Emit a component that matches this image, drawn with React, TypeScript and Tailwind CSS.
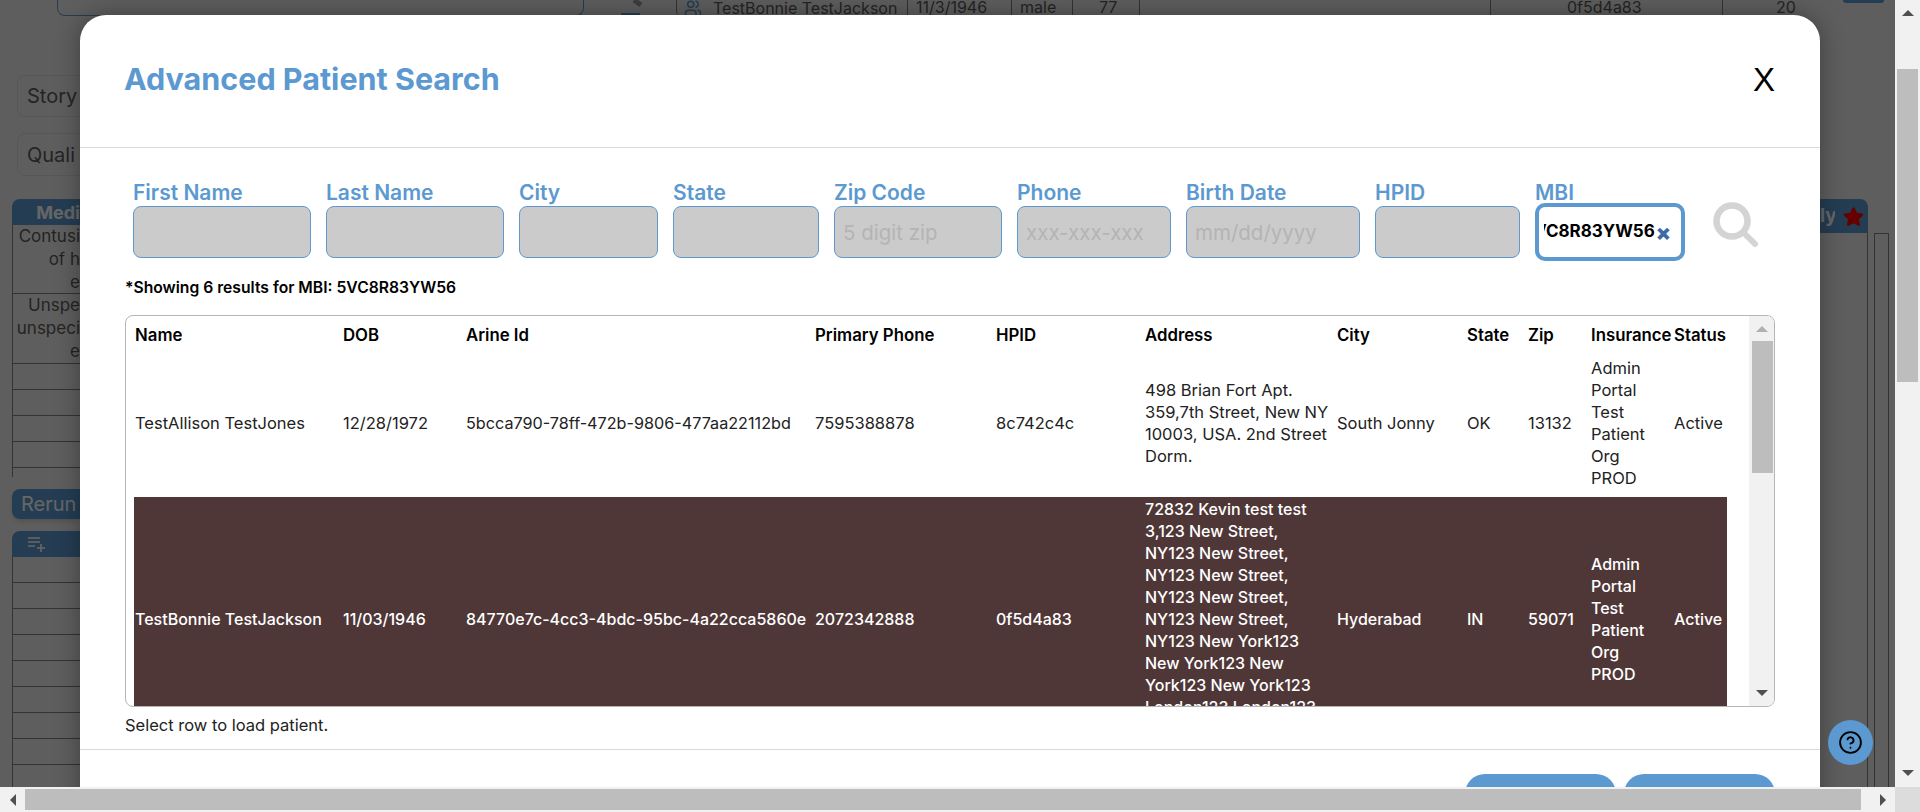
import { CircleHelp, Users } from "lucide-react";
import { FaStar } from "react-icons/fa";

const fields = [
  { label: "First Name", width: "w-[178px]" },
  { label: "Last Name", width: "w-[178px]" },
  { label: "City", width: "w-[139px]" },
  { label: "State", width: "w-[146px]" },
  { label: "Zip Code", width: "w-[168px]", placeholder: "5 digit zip" },
  { label: "Phone", width: "w-[154px]", placeholder: "xxx-xxx-xxx" },
  { label: "Birth Date", width: "w-[174px]", placeholder: "mm/dd/yyyy" },
  { label: "HPID", width: "w-[145px]" },
];

const columns = [
  { name: "Name", width: "w-[207px]" },
  { name: "DOB", width: "w-[123px]" },
  { name: "Arine Id", width: "w-[349px]" },
  { name: "Primary Phone", width: "w-[181px]" },
  { name: "HPID", width: "w-[149px]" },
  { name: "Address", width: "w-[192px]" },
  { name: "City", width: "w-[130px]" },
  { name: "State", width: "w-[61px]" },
  { name: "Zip", width: "w-[63px]" },
  { name: "Insurance", width: "w-[83px]" },
  { name: "Status", width: "w-[55px]" },
];

const insurance = ["Admin", "Portal", "Test", "Patient", "Org", "PROD"];

const patients = [
  {
    name: "TestAllison TestJones",
    dob: "12/28/1972",
    id: "5bcca790-78ff-472b-9806-477aa22112bd",
    phone: "7595388878",
    hpid: "8c742c4c",
    address: ["498 Brian Fort Apt.", "359,7th Street, New NY", "10003, USA. 2nd Street", "Dorm."],
    city: "South Jonny",
    state: "OK",
    zip: "13132",
    selected: false,
  },
  {
    name: "TestBonnie TestJackson",
    dob: "11/03/1946",
    id: "84770e7c-4cc3-4bdc-95bc-4a22cca5860e",
    phone: "2072342888",
    hpid: "0f5d4a83",
    address: [
      "72832 Kevin test test",
      "3,123 New Street,",
      "NY123 New Street,",
      "NY123 New Street,",
      "NY123 New Street,",
      "NY123 New Street,",
      "NY123 New York123",
      "New York123 New",
      "York123 New York123",
      "London123 London123",
      "London123",
    ],
    city: "Hyderabad",
    state: "IN",
    zip: "59071",
    selected: true,
  },
];

function Lines({ lines }: { lines: string[] }) {
  return (
    <>
      {lines.map((line, index) => (
        <span key={index} className="block whitespace-nowrap">
          {line}
        </span>
      ))}
    </>
  );
}

function Arrow({ direction, color = "#505050" }: { direction: "up" | "down" | "left" | "right"; color?: string }) {
  const points = {
    up: "0,8 6,0 12,8",
    down: "0,0 6,8 12,0",
    left: "8,0 8,12 0,6",
    right: "0,0 0,12 8,6",
  }[direction];
  const box = direction === "up" || direction === "down" ? "0 0 12 8" : "0 0 8 12";
  const size = direction === "up" || direction === "down" ? "h-[6px] w-[12px]" : "h-[12px] w-[6px]";
  return (
    <svg className={size} viewBox={box} preserveAspectRatio="none">
      <polygon points={points} fill={color} />
    </svg>
  );
}

function SearchGlyph() {
  return (
    <svg className="h-[46px] w-[46px]" viewBox="0 0 46 46">
      <circle cx="19" cy="19" r="15.5" fill="none" stroke="#d4d4d4" strokeWidth="6.5" />
      <line x1="31" y1="31" x2="42" y2="42" stroke="#d4d4d4" strokeWidth="6" strokeLinecap="round" />
    </svg>
  );
}

function PageBehind() {
  return (
    <div className="flex h-full w-full flex-col bg-[#ececec] font-['Inter',sans-serif] text-[#5a5a5a]">
      <div className="flex h-[16px] shrink-0 pl-[57px] text-[16px] leading-[14px]">
        <div className="h-[16px] w-[527px] rounded-b-lg border border-t-0 border-[#5b99d0]" />
        <svg className="ml-[37px] h-[16px] w-[26px]" viewBox="0 0 26 16">
          <rect x="0" y="13" width="19" height="2" fill="#5b99d0" />
          <line x1="13" y1="0" x2="20" y2="5" stroke="#999" strokeWidth="5" />
        </svg>
        <div className="ml-[29px] flex h-[15px] w-[231px] items-center overflow-hidden rounded-bl-sm border-l border-[#808080] pl-[7px]">
          <Users className="h-[22px] w-[18px] shrink-0 text-[#5b99d0]" />
          <span className="ml-[11px] whitespace-nowrap">TestBonnie TestJackson</span>
        </div>
        <div className="h-[15px] w-[104px] overflow-hidden border-l border-[#808080] pl-[8px]">11/3/1946</div>
        <div className="h-[15px] w-[61px] overflow-hidden border-l border-[#808080] pl-[8px]">male</div>
        <div className="h-[15px] w-[67px] overflow-hidden border-l border-[#808080] pl-[26px]">77</div>
        <div className="h-[15px] w-[351px] border-l border-[#808080]" />
        <div className="h-[15px] w-[232px] overflow-hidden border-l border-[#808080] pl-[76px]">0f5d4a83</div>
        <div className="h-[15px] w-[95px] overflow-hidden border-l border-[#808080] pl-[53px]">20</div>
        <div className="ml-[26px] h-[3px] w-[41px] rounded-b-md bg-[#5b99d0]" />
      </div>

      <div className="flex min-h-0 flex-1 justify-between">
        <div className="flex w-[80px] flex-col overflow-hidden pl-[12px] *:shrink-0">
          <div className="ml-[5px] mt-[59px] flex h-[42px] items-center rounded-l-lg border border-r-0 border-[#dadada] pl-[9px] text-[20px]">
            Story
          </div>
          <div className="ml-[5px] mt-[16px] flex h-[43px] items-center rounded-l-lg border border-r-0 border-[#dadada] pl-[9px] text-[20px]">
            Quali
          </div>
          <div className="mt-[23px] flex h-[26px] items-center justify-end rounded-tl-lg bg-[#5b99d0] text-[18px] font-bold text-white">
            Medi
          </div>
          <div className="border-l border-[#808080] text-right text-[17px] leading-[23px]">
            <div className="h-[69px] border-b border-[#808080]">
              <Lines lines={["Contusi", "of h", "e"]} />
            </div>
            <div className="h-[70px] border-b border-[#808080]">
              <Lines lines={["Unspe", "unspeci", "e"]} />
            </div>
            {[0, 1, 2, 3].map((row) => (
              <div key={row} className="h-[26px] border-b border-[#808080]" />
            ))}
            <div className="h-[9px]" />
          </div>
          <div className="mt-[12px] flex h-[30px] items-center rounded-l-lg bg-[#5b99d0] pl-[9px] text-[20px] text-white shadow-md">
            Rerun
          </div>
          <div className="mt-[12px] flex h-[26px] items-center rounded-tl-lg bg-[#5b99d0] pl-[15px] text-white">
            <svg className="h-[16px] w-[20px]" viewBox="0 0 20 16" fill="none" stroke="currentColor" strokeWidth="1.6">
              <path d="M1 2h12M1 6h12M1 10h7M14 8v8M10 12h8" />
            </svg>
          </div>
          <div className="flex-1 overflow-hidden border-l border-[#808080]">
            {[0, 1, 2, 3, 4, 5, 6, 7, 8].map((row) => (
              <div key={row} className="h-[26px] border-b border-[#808080]" />
            ))}
          </div>
        </div>

        <div className="flex w-[75px] flex-col pt-[183px]">
          <div className="flex h-[34px] w-[48px] items-center gap-[8px] rounded-tr-lg bg-[#5b99d0] text-[19px] font-bold text-white">
            <span className="w-[15px] overflow-hidden text-right">ly</span>
            <FaStar className="h-[19px] w-[21px] text-[#ff0000]" />
          </div>
          <div className="flex flex-1 pl-[47px]">
            <div className="w-[7px] border-l border-[#808080]" />
            <div className="w-[15px] border border-b-0 border-[#808080]" />
          </div>
        </div>
      </div>
    </div>
  );
}

function PatientTable() {
  return (
    <div className="flex h-[392px] overflow-hidden rounded-lg border border-[#b5b5b5] pl-[8px] text-[16.5px] leading-[22px] text-[#222]">
      <div className="w-[1593px] shrink-0">
        <table className="w-full table-fixed border-separate border-spacing-0 text-left">
          <colgroup>
            {columns.map((column) => (
              <col key={column.name} className={column.width} />
            ))}
          </colgroup>
          <thead>
            <tr className="h-[40px]">
              {columns.map((column) => (
                <th key={column.name} className="whitespace-nowrap px-[2px] pb-[3px] text-[16.8px] font-semibold text-black first:pl-px">
                  {column.name}
                </th>
              ))}
            </tr>
          </thead>
          <tbody>
            {patients.map((patient) => {
              const cell = patient.selected
                ? "bg-[#4f3737] px-[2px] py-px align-middle text-[16px] font-medium text-white whitespace-nowrap first:pl-px"
                : "px-[2px] pb-[8px] pt-px align-middle whitespace-nowrap first:pl-px";
              return (
                <tr key={patient.id}>
                  <td className={cell}>{patient.name}</td>
                  <td className={cell}>{patient.dob}</td>
                  <td className={`${cell} text-[16.2px]`}>{patient.id}</td>
                  <td className={cell}>{patient.phone}</td>
                  <td className={cell}>{patient.hpid}</td>
                  <td className={cell}>
                    <Lines lines={patient.address} />
                  </td>
                  <td className={cell}>{patient.city}</td>
                  <td className={cell}>{patient.state}</td>
                  <td className={cell}>{patient.zip}</td>
                  <td className={cell}>
                    <Lines lines={insurance} />
                  </td>
                  <td className={cell}>Active</td>
                </tr>
              );
            })}
          </tbody>
        </table>
      </div>
      <div className="ml-[22px] flex w-[26px] shrink-0 flex-col items-center bg-[#f1f1f1]">
        <div className="flex h-[25px] items-center">
          <Arrow direction="up" color="#b0b0b0" />
        </div>
        <div className="h-[132px] w-[21px] bg-[#bdbdbd]" />
        <div className="flex flex-1 items-end pb-[10px]">
          <Arrow direction="down" />
        </div>
      </div>
    </div>
  );
}

function SearchModal() {
  return (
    <div className="absolute left-[80px] top-[15px] w-[1740px] rounded-t-[26px] bg-white font-['Inter',sans-serif] shadow-[0_0_24px_rgba(0,0,0,0.35)]">
      <div className="flex h-[133px] items-center justify-between border-b border-[#d9d9d9] px-[45px] pb-[4px]">
        <h2 className="-ml-px text-[30.5px] font-bold text-[#5b99d0]">Advanced Patient Search</h2>
        <span className="text-[33px] font-['Liberation_Sans',sans-serif] leading-none text-black">X</span>
      </div>

      <div className="px-[45px]">
        <div className="flex items-start pl-[8px] pt-[33px]">
          {fields.map((field) => (
            <label key={field.label} className={`mr-[15px] block shrink-0 ${field.width}`}>
              <span className="block h-[25px] text-[21px] font-semibold leading-[24px] text-[#5b99d0]">{field.label}</span>
              <input
                disabled
                placeholder={field.placeholder}
                className="block h-[52px] w-full rounded-lg border border-[#5b99d0] bg-[#cbcbcb] px-[8px] text-[20.5px] outline-none placeholder:text-[#b4b4b4]"
              />
            </label>
          ))}
          <div className="w-[150px] shrink-0">
            <span className="block h-[22px] text-[21px] font-semibold leading-[24px] text-[#5b99d0]">MBI</span>
            <div className="flex h-[58px] items-center justify-end overflow-hidden rounded-[10px] border-[4px] border-[#5b99d0] bg-white pl-[5px] pr-[10px] text-[17px] font-bold text-black">
              <span className="min-w-0 flex-1 overflow-hidden">
                <span className="float-right whitespace-nowrap">5VC8R83YW56</span>
              </span>
              <span className="ml-[1px] text-[22px] font-black leading-none text-[#3f6aa8]">×</span>
            </div>
          </div>
          <div className="ml-[28px] mt-[21px] shrink-0">
            <SearchGlyph />
          </div>
        </div>

        <p className="mt-[16px] h-[38px] text-[15.7px] font-semibold leading-[22px] text-black">*Showing 6 results for MBI: 5VC8R83YW56</p>
        <PatientTable />
        <p className="flex h-[42px] items-center pb-[6px] text-[16.5px] text-[#222]">Select row to load patient.</p>
      </div>

      <div className="flex justify-end gap-[8px] border-t border-[#d9d9d9] px-[45px] pb-[25px] pt-[24px]">
        <div className="h-[50px] w-[151px] rounded-[20px] bg-[#5b99d0]" />
        <div className="h-[50px] w-[151px] rounded-[20px] bg-[#5b99d0]" />
      </div>
    </div>
  );
}

export default function App() {
  return (
    <div className="flex h-[812px] w-[1920px] flex-col overflow-hidden">
      <div className="flex min-h-0 flex-1">
        <div className="relative min-w-0 flex-1 overflow-hidden">
          <PageBehind />
          <div className="absolute inset-0 bg-black/60" />
          <SearchModal />
          <button className="absolute left-[1828px] top-[720px] flex h-[45px] w-[45px] items-center justify-center rounded-full bg-[#5b99d0] text-black">
            <CircleHelp className="h-[25px] w-[25px]" strokeWidth={1.8} />
          </button>
        </div>
        <div className="flex w-[25px] shrink-0 flex-col items-center bg-[#f1f1f1]">
          <div className="flex h-[69px] w-full justify-center pt-[10px]">
            <Arrow direction="up" />
          </div>
          <div className="h-[313px] w-[21px] bg-[#bdbdbd]" />
          <div className="flex flex-1 items-end pb-[11px]">
            <Arrow direction="down" />
          </div>
        </div>
      </div>
      <div className="flex h-[25px] shrink-0 items-center bg-[#f1f1f1]">
        <div className="flex w-[25px] justify-center">
          <Arrow direction="left" />
        </div>
        <div className="h-[21px] w-[1836px] bg-[#bdbdbd]" />
        <div className="flex w-[34px] justify-end pr-[9px]">
          <Arrow direction="right" />
        </div>
        <div className="h-[25px] w-[25px] bg-[#dcdcdc]" />
      </div>
    </div>
  );
}
